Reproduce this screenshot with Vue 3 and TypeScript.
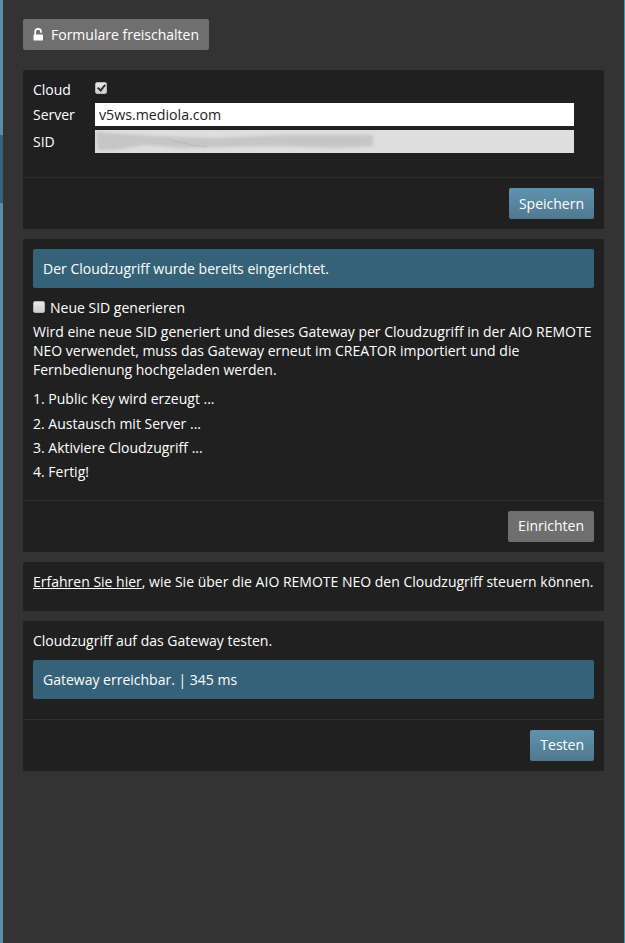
<script setup lang="ts">
const steps: string[] = [
  '1. Public Key wird erzeugt ...',
  '2. Austausch mit Server ...',
  '3. Aktiviere Cloudzugriff ...',
  '4. Fertig!',
]
</script>

<template>
  <div class="page">
    <div class="rail">
      <span class="rail-light top"></span>
      <span class="rail-dark"></span>
      <span class="rail-light fill"></span>
    </div>
    <main class="content">
      <button class="btn grey unlock" type="button">
        <svg width="11" height="13" viewBox="0 0 11 13" aria-hidden="true">
          <path d="M2.200 7V3.800a2.900 2.900 0 0 1 5.800 0V4.800" fill="none" stroke="#fff" stroke-width="1.700"/>
          <rect x="0.500" y="6.500" width="9.500" height="6" rx="0.600" fill="#fff"/>
        </svg>
        Formulare freischalten
      </button>

      <section class="panel first">
        <div class="body form">
          <div class="row cloud">
            <label>Cloud</label>
            <input class="check" type="checkbox" checked disabled />
          </div>
          <div class="row">
            <label>Server</label>
            <input class="field" type="text" value="v5ws.mediola.com" />
          </div>
          <div class="row">
            <label>SID</label>
            <div class="field sid">
              <svg class="smear" width="290" height="23" viewBox="0 0 290 23" aria-hidden="true">
                <defs>
                  <filter id="smear-blur" x="-5%" y="-40%" width="110%" height="180%">
                    <feGaussianBlur stdDeviation="1.500"/>
                  </filter>
                </defs>
                <path d="M1 2 L16 3 L60 6 L120 8 L190 5 L255 5 L278 5 L278 16 L240 18 L180 16 L130 17 L85 18 L50 15 L20 20 L3 20 Z" fill="#c6c6c6" filter="url(#smear-blur)"/>
                <path d="M78 11 L98 15 L112 17" fill="none" stroke="#b0b0b0" stroke-width="0.600"/>
              </svg>
            </div>
          </div>
        </div>
        <div class="foot"><button class="btn blue" type="button">Speichern</button></div>
      </section>

      <section class="panel">
        <div class="body setup">
          <div class="alert">Der Cloudzugriff wurde bereits eingerichtet.</div>
          <label class="newsid"><input class="check" type="checkbox" /> Neue SID generieren</label>
          <p class="note">Wird eine neue SID generiert und dieses Gateway per Cloudzugriff in der AIO REMOTE NEO verwendet, muss das Gateway erneut im CREATOR importiert und die Fernbedienung hochgeladen werden.</p>
          <ul class="steps">
            <li v-for="step in steps" :key="step">{{ step }}</li>
          </ul>
        </div>
        <div class="foot"><button class="btn grey" type="button">Einrichten</button></div>
      </section>

      <section class="panel">
        <div class="body info"><a href="#">Erfahren Sie hier</a>, wie Sie über die AIO REMOTE NEO den Cloudzugriff steuern können.</div>
      </section>

      <section class="panel">
        <div class="body test">
          <p class="test-title">Cloudzugriff auf das Gateway testen.</p>
          <div class="alert">Gateway erreichbar. | 345 ms</div>
        </div>
        <div class="foot"><button class="btn blue" type="button">Testen</button></div>
      </section>
    </main>
  </div>
</template>

<style>
html, body { margin: 0; background: #333; }
</style>

<style scoped>
.page {
  display: flex;
  width: 625px;
  height: 943px;
  overflow: hidden;
  box-sizing: border-box;
  background: #333;
  border-right: 1px solid #3f9aa8;
  color: #fff;
  font-family: "Open Sans", sans-serif;
  font-size: 14px;
  line-height: 20px;
}
.rail { display: flex; flex-direction: column; flex: 0 0 3px; }
.rail-light { background: #5b8ca8; }
.rail-light.top { height: 135px; }
.rail-light.fill { flex: 1; }
.rail-dark { height: 68px; background: #36627a; }
.content { width: 581px; margin-left: 20px; padding-top: 19px; }
.btn {
  height: 31px;
  padding: 0 10px;
  border: 0;
  border-radius: 2px;
  color: #fff;
  font: inherit;
  display: inline-flex;
  align-items: center;
}
.grey { background: #6f6f6f; }
.blue { background: linear-gradient(#5f93ad, #527790); }
.unlock { gap: 7px; }
.panel { background: #202020; border-radius: 2px; margin-bottom: 10px; }
.panel.first { margin-top: 20px; }
.body { padding: 10px; }
.form { padding-bottom: 24px; }
.row { display: flex; align-items: center; height: 23px; margin-bottom: 4px; }
.row:last-child { margin-bottom: 0; }
.row.cloud { height: 20px; margin-bottom: 3px; }
.row label { flex: 0 0 62px; }
.check {
  appearance: none;
  box-sizing: border-box;
  width: 12px;
  height: 12px;
  margin: 0;
  border-radius: 2px;
  border: 1px solid #b5b5b5;
  background: linear-gradient(#e8e8e8, #cfcfcf);
  position: relative;
}
.check:checked::after {
  content: "";
  position: absolute;
  left: 3px;
  top: 0;
  width: 3px;
  height: 6px;
  border: solid #333;
  border-width: 0 2px 2px 0;
  transform: rotate(40deg);
}
.cloud .check { margin-top: -5px; }
.field {
  box-sizing: border-box;
  width: 479px;
  height: 23px;
  padding: 0 4px;
  border: 0;
  background: #fff;
  color: #222;
  font: inherit;
  font-size: 14.200px;
  outline: none;
}
.sid { background: #dedede; position: relative; overflow: hidden; padding: 0; }
.smear { position: absolute; left: 0; top: 0; }
.foot {
  display: flex;
  justify-content: flex-end;
  padding: 10px;
  border-top: 1px solid #2e2e2e;
}
.alert {
  height: 39px;
  box-sizing: border-box;
  padding: 10px;
  line-height: 19px;
  background: #356278;
  border-radius: 2px;
}
.setup { padding-bottom: 14.800px; }
.newsid { display: flex; align-items: center; gap: 5px; margin-top: 10px; height: 20px; }
.newsid .check { margin-top: -3px; width: 12px; height: 12px; }
.note { margin: 4px 0 0; line-height: 19px; }
.steps { list-style: none; margin: 8.200px 0 0; padding: 0; }
.steps li { height: 24.400px; line-height: 24px; }
.info { height: 49px; box-sizing: border-box; line-height: 19px; }
.info a { color: #fff; text-decoration: underline; }
.test { padding-bottom: 20px; }
.test-title { margin: 0 0 9px; height: 20px; line-height: 20px; }
</style>
